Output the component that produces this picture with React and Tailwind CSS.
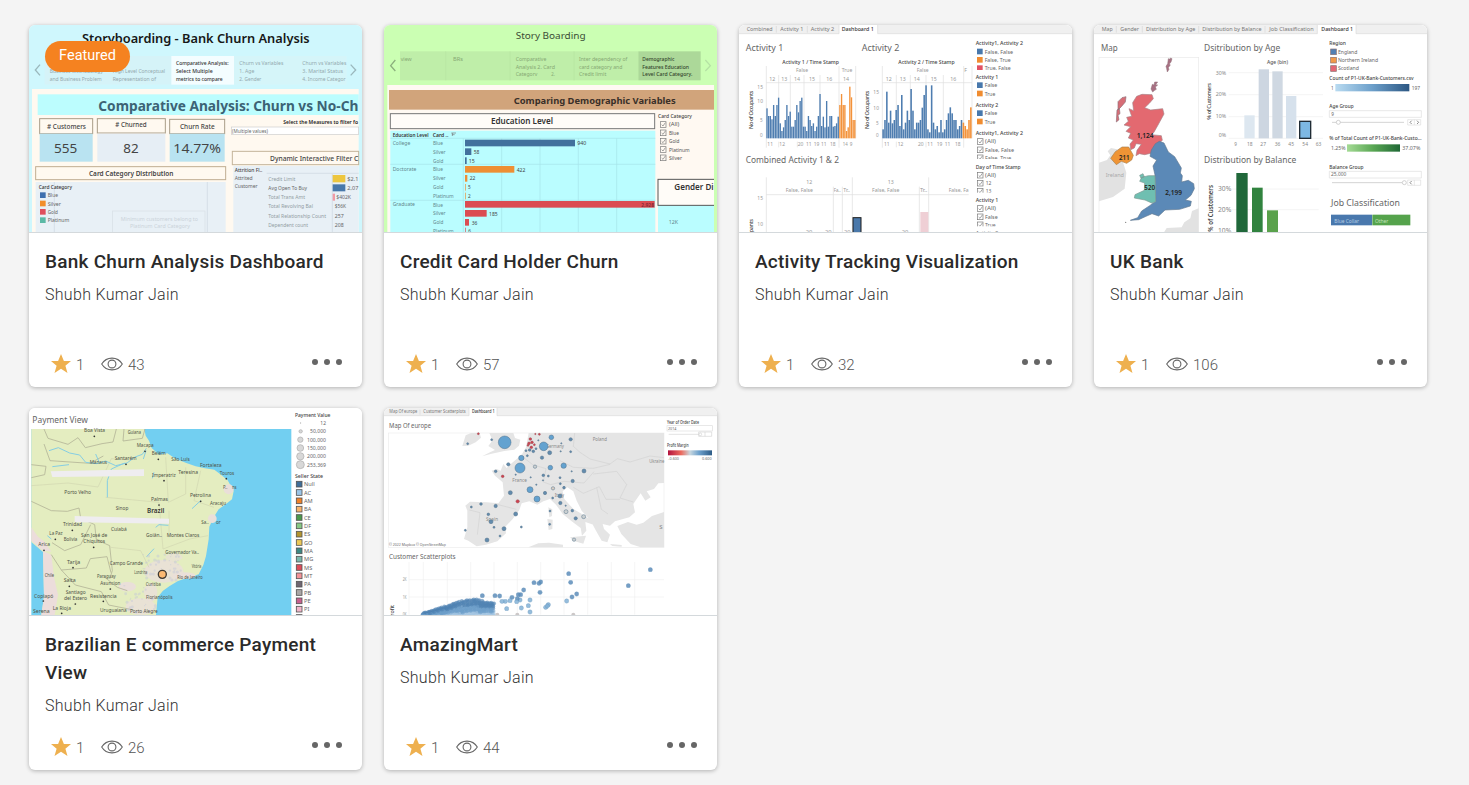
import React from 'react';

// Each label: [text, x, baseline, width, size, fill, weight]
function Labels({ items, fill = '#666', size = 19 }) {
  return items.map(([t, x, y, w, s, f, b], i) => (
    <text key={i} x={x} y={y} fontSize={s || size} fill={f || fill} fontWeight={b || 400}
      textLength={w} lengthAdjust="spacingAndGlyphs">{t}</text>
  ));
}

function Thumb({ box, children }) {
  return (
    <svg viewBox={box} className="block h-[207px] w-full" preserveAspectRatio="none" fontFamily='"Noto Sans", sans-serif'>
      {children}
    </svg>
  );
}

const R = ({ x, y, w, h, f = 'none', s, sw = 3, o }) => (
  <rect x={x} y={y} width={w} height={h} fill={f} stroke={s} strokeWidth={s ? sw : undefined} opacity={o} />
);

function Swatches({ x, y, step, colors, size = 17, stroke }) {
  return colors.map((c, i) => <R key={i} x={x} y={y + i * step} w={size} h={size} f={c} s={stroke} sw={2} />);
}

function Checks({ x, ys }) {
  return ys.map((y) => (
    <g key={y} fill="none" stroke="#777" strokeWidth="2">
      <rect x={x} y={y} width="17" height="17" />
      <path d={`M${x + 4} ${y + 9}l4 4 7-10`} />
    </g>
  ));
}

function BankChurn() {
  return (
    <Thumb box="15 15 999 621">
      <R x={10} y={10} w={1010} h={630} f="#cff7fd" />
      <Labels items={[['Storyboarding - Bank Churn Analysis', 174, 68, 683, 35, '#171717', 600]]} />
      <R x={62} y={108} w={380} h={86} f="#d5f3f8" />
      <R x={442} y={108} w={188} h={86} f="#f4fdff" />
      <R x={630} y={108} w={338} h={86} f="#d5f5f9" />
      <path d="M48 134l-14 16 14 16M980 134l15 16-15 16" fill="none" stroke="#9bb8bd" strokeWidth="4" />
      <Labels size={18} fill="#93a9ae" items={[
        ['Business Methodology', 77, 160, 160], ['and Business Problem', 77, 182, 156],
        ['High Level Conceptual', 266, 160, 157], ['Representation of', 266, 182, 130],
        ['Comparative Analysis:', 456, 136, 158, 18, '#333', 500], ['Select Multiple', 456, 160, 110, 18, '#333', 500], ['metrics to compare', 456, 182, 140, 18, '#333', 500],
        ['Churn vs Variables', 646, 136, 132], ['1. Age', 646, 160, 45], ['2. Gender', 646, 182, 66],
        ['Churn vs Variables', 835, 136, 132], ['3. Marital Status', 835, 160, 122], ['4. Income Categor', 835, 182, 130],
      ]} />
      <R x={24} y={207} w={980} h={430} f="#fff9f0" />
      <R x={41} y={223} w={963} h={62} f="#bcfdfe" />
      <Labels items={[['Comparative Analysis: Churn vs No-Ch', 223, 273, 780, 42, '#3c6375', 700]]} />
      <R x={47} y={296} w={159} h={45} s="#a99d88" /><R x={220} y={296} w={204} h={43} s="#a99d88" /><R x={437} y={298} w={165} h={43} s="#a99d88" />
      <R x={47} y={341} w={159} h={84} f="#b9e3f1" /><R x={220} y={341} w={204} h={84} f="#e6eef5" /><R x={437} y={341} w={165} h={84} f="#b9e3f1" />
      <Labels fill="#444" items={[
        ['# Customers', 69, 326, 117, 23, '#444', 500], ['# Churned', 274, 322, 94, 23, '#444', 500], ['Churn Rate', 468, 327, 104, 23, '#444', 500],
        ['555', 90, 399, 70, 39], ['82', 298, 399, 46, 39], ['14.77%', 448, 399, 143, 39],
        ['Select the Measures to filter fo', 778, 311, 224, 17, '#222', 600],
      ]} />
      <R x={622} y={321} w={382} h={22} f="#fff" s="#ccc" sw={2} />
      <Labels items={[['(Multiple values)', 624, 338, 108, 16]]} />
      <R x={625} y={394} w={379} h={40} s="#c4b49a" />
      <Labels items={[['Dynamic Interactive Filter C', 738, 422, 265, 23, '#444', 500]]} />
      <R x={35} y={440} w={570} h={39} s="#c0ad91" />
      <Labels items={[['Card Category Distribution', 195, 469, 253, 22, '#444', 600]]} />
      <R x={35} y={486} w={570} h={151} f="#e8f0f6" /><R x={628} y={438} w={376} h={199} f="#e8f0f6" />
      <path d="M91 486v151M550 486v151M728 460h276M925 462v175" stroke="#cbd8df" strokeWidth="2" />
      <Swatches x={48} y={517} step={25} colors={['#3e6fae', '#f28e2b', '#df4f5d', '#5bb9a6']} />
      <Labels size={17} items={[['Card Category', 44, 508, 100, 17, '#333', 500], ['Blue', 71, 532, 31], ['Silver', 71, 557, 40], ['Gold', 71, 582, 31], ['Platinum', 71, 607, 65]]} />
      <R x={265} y={573} w={278} h={72} s="#d7dfe5" sw={2} />
      <Labels size={17} fill="#cbd3da" items={[['Minimum customers belong to', 290, 602, 232], ['Platinum Card Category', 318, 625, 180]]} />
      <Labels size={17} items={[
        ['Attrition Fl..', 632, 456, 83, 17, '#444', 500], ['Attrited', 632, 481, 54], ['Customer', 632, 504, 69],
        ['Credit Limit', 733, 482, 81, 17, '#929da3'], ['Avg Open To Buy', 733, 510, 116], ['Total Trans Amt', 733, 537, 110, 17, '#929da3'], ['Total Revolving Bal', 733, 565, 134, 17, '#929da3'], ['Total Relationship Count', 733, 593, 173, 17, '#929da3'], ['Dependent count', 733, 621, 119, 17, '#929da3'],
        ['$2.1', 970, 482, 33], ['2,07', 970, 510, 33], ['$402K', 937, 537, 44], ['$56K', 932, 565, 34], ['257', 932, 593, 27], ['208', 932, 621, 27],
      ]} />
      <R x={926} y={465} w={38} h={22} f="#edc63f" /><R x={926} y={493} w={38} h={21} f="#4878aa" /><R x={926} y={521} w={7} h={21} f="#f19aa5" />
    </Thumb>
  );
}

function CreditCard() {
  const bars = [[54, 330, 0], [80, 19, 0], [107, 5, 0], [133, 148, 1], [160, 7, 1], [187, 2, 1], [213, 2, 1], [238, 569, 2], [265, 65, 2], [292, 12, 2], [318, 2, 2]];
  return (
    <Thumb box="12 15 999 621">
      <R x={8} y={10} w={1010} h={630} f="#cbffb3" />
      <Labels items={[['Story Boarding', 407, 58, 210, 29, '#3c4d36']]} />
      <R x={60} y={94} w={715} h={87} f="#bfeea9" /><R x={775} y={94} w={187} h={87} f="#acd899" />
      <path d="M197 94v87M390 94v87M582 94v87" stroke="#b7e5a2" strokeWidth="2" />
      <path d="M46 120l-14 17 14 16" fill="none" stroke="#8baf7d" strokeWidth="4" />
      <path d="M976 120l15 17-15 16" fill="none" stroke="#b5e2a4" strokeWidth="4" />
      <Labels size={17} fill="#86a974" items={[
        ['view', 62, 123, 33], ['BRs', 219, 123, 30], ['Comparative', 407, 124, 92], ['Analysis 2. Card', 407, 146, 118], ['Categorv', 407, 168, 65], ['2.', 514, 168, 11],
        ['Inter dependency of', 597, 124, 145], ['card category and', 597, 146, 130], ['Credit limit', 597, 168, 82],
        ['Demographic', 787, 124, 96, 17, '#34452c', 500], ['Features Education', 787, 146, 140, 17, '#34452c', 500], ['Level  Card Category.', 787, 168, 150, 17, '#34452c', 500],
      ]} />
      <R x={22} y={195} w={980} h={442} f="#fff9f2" />
      <R x={27} y={210} w={975} h={59} f="#d1a47b" />
      <Labels items={[['Comparing Demographic Variables', 401, 251, 486, 28, '#3a3029', 700]]} />
      <R x={31} y={281} w={793} h={45} f="#fffcf8" s="#777" />
      <Labels items={[['Education Level', 333, 313, 186, 25, '#333', 600]]} />
      <R x={31} y={332} w={795} h={305} f="#bafdff" />
      <R x={834} y={555} w={168} h={82} f="#bafdff" />
      <R x={834} y={478} w={180} h={78} f="#fffcf8" s="#555" /><R x={1002} y={470} w={14} h={170} f="#cbffb3" />
      <path d="M31 355h795M31 433h795M31 541h795M250 355v282M365 355v282M480 355v282M595 355v282M710 355v282" stroke="#a6e4e8" strokeWidth="2" />
      {bars.map(([y, w, c], i) => <R key={i} x={255} y={y + 305} w={w} h={20} f={['#42719d', '#ee8f34', '#db4c52'][c]} />)}
      <Labels size={17} fill="#62888e" items={[
        ['Education Level', 38, 350, 108, 16, '#333', 600], ['Card ..', 158, 350, 47, 16, '#333', 600],
        ['College', 38, 374, 53], ['Blue', 159, 375, 30], ['Silver', 159, 401, 38], ['Gold', 159, 428, 31],
        ['Doctorate', 38, 453, 71], ['Blue', 159, 454, 30], ['Silver', 159, 480, 38], ['Gold', 159, 507, 31], ['Platinum', 159, 534, 62],
        ['Graduate', 38, 559, 67], ['Blue', 159, 560, 30], ['Silver', 159, 586, 38], ['Gold', 159, 613, 31], ['Platinum', 159, 639, 62],
        ['940', 592, 376, 27, 18, '#444'], ['58', 281, 401, 17, 18, '#444'], ['15', 266, 428, 18, 18, '#444'], ['422', 410, 455, 26, 18, '#444'], ['22', 269, 481, 17, 18, '#444'], ['5', 264, 508, 8, 18, '#444'], ['2', 264, 535, 8, 18, '#444'], ['2,928', 784, 560, 38, 18, '#7f2732', 600], ['185', 327, 587, 26, 18, '#444'], ['36', 275, 614, 17, 18, '#444'], ['6', 265, 639, 8, 18, '#444'],
        ['Card Category', 834, 294, 102, 17, '#444', 500], ['(All)', 867, 319, 31, 17, '#555'], ['Blue', 867, 344, 30, 17, '#555'], ['Gold', 867, 370, 31, 17, '#555'], ['Platinum', 867, 395, 62, 17, '#555'], ['Silver', 867, 420, 39, 17, '#555'],
        ['Gender Di', 883, 510, 118, 25, '#333', 600], ['12K', 866, 611, 28, 18],
      ]} />
      <path d="M214 339h14M216 344h8M217 339v9" stroke="#777" strokeWidth="2" />
      <Checks x={841} ys={[305, 330, 355, 380, 405]} />
    </Thumb>
  );
}

function Tabs({ y, items, active, ax, aw }) {
  return (
    <g>
      <R x={8} y={12} w={1010} h={y + 8 - 12} f="#f0f0f0" />
      <R x={ax} y={12} w={aw} h={y + 10 - 12} f="#fff" />
      <path d={`M8 ${y + 8}H${ax}V12M${ax + aw} 12V${y + 8}H1018`} fill="none" stroke="#dadada" strokeWidth="2" />
      <Labels size={18} fill="#777" items={items} />
      <Labels size={18} items={[active]} />
    </g>
  );
}

function Columns({ x, base, step, tops, orangeFrom }) {
  return tops.map((t, i) => <R key={i} x={x + i * step} y={t} w={step - 0.9} h={base - t} f={i < orangeFrom ? '#4e7db0' : '#f3923a'} />);
}

const activityOne = [265, 288, 288, 298, 255, 288, 255, 233, 310, 333, 322, 300, 255, 288, 275, 320, 320, 300, 255, 277, 243, 233, 320, 320, 333, 288, 300, 318, 310, 333, 320, 288, 222, 318, 290, 322, 243, 320, 288, 288, 320, 318, 310, 290, 255, 222, 255, 255, 333, 322, 200, 232, 300, 300];
const activityTwo = [328, 300, 215, 308, 272, 310, 300, 270, 255, 318, 225, 328, 308, 272, 300, 207, 272, 328, 308, 308, 300, 263, 225, 196, 328, 337, 196, 308, 328, 318, 337, 300, 337, 328, 300, 280, 262, 280, 300, 300, 328, 318, 300, 308, 318, 328, 300, 262];

function Activity() {
  return (
    <Thumb box="12 15 999 621">
      <R x={8} y={10} w={1010} h={630} f="#fff" />
      <Tabs y={33} ax={312} aw={116} items={[['Combined', 35, 33, 78], ['Activity 1', 136, 33, 69], ['Activity 2', 227, 33, 71]]} active={['Dashboard 1', 320, 33, 96, 18, '#333', 500]} />
      <path d="M124 18v20M217 18v20" stroke="#d8d8d8" strokeWidth="2" />
      <Labels items={[['Activity 1', 32, 94, 113, 27], ['Activity 2', 380, 94, 113, 27], ['Combined Activity 1 & 2', 32, 430, 280, 27]]} />
      <path d="M94 138v245M131 165v190M166 165v190M207 165v190M255 165v190M312 138v245M362 138v217M94 188h268M442 138v245M484 165v190M526 165v190M573 165v190M625 165v190M686 138v245M711 138v217M442 188h269M131 365v17M187 365v17M484 365v17M573 365v17" stroke="#dedede" strokeWidth="2" />
      <Columns x={94} base={355} step={4.97} tops={activityOne} orangeFrom={44} />
      <Columns x={442} base={355} step={5.6} tops={activityTwo} orangeFrom={43} />
      <Labels size={17} fill="#999" items={[
        ['Activity 1 / Time Stamp', 142, 131, 170, 18, '#444', 500], ['Activity 2 / Time Stamp', 490, 131, 169, 18, '#444', 500],
        ['False', 183, 156, 36], ['True', 320, 156, 32], ['False', 545, 156, 36], ['F', 688, 156, 8],
        ['12', 103, 182, 18], ['13', 139, 182, 18], ['14', 177, 182, 18], ['15', 222, 182, 18], ['16', 274, 182, 18], ['14', 324, 182, 18],
        ['12', 452, 182, 18], ['13', 494, 182, 18], ['14', 536, 182, 18], ['15', 587, 182, 18], ['16', 646, 182, 18],
        ['15', 67, 206, 17], ['10', 67, 250, 17], ['5', 75, 305, 8], ['0', 75, 350, 8], ['15', 415, 222, 17], ['10', 415, 269, 17], ['5', 423, 315, 8], ['0', 423, 350, 8],
        ['11', 97, 378, 17], ['12', 133, 378, 17], ['20', 188, 378, 17], ['11', 213, 378, 17], ['19', 236, 378, 17], ['11', 258, 378, 17], ['18', 285, 378, 17], ['14', 323, 378, 15], ['9', 344, 378, 8],
        ['11', 447, 378, 17], ['12', 488, 378, 17], ['20', 549, 378, 17], ['11', 577, 378, 17], ['19', 605, 378, 17], ['11', 629, 378, 17], ['18', 660, 378, 17],
        ['12', 214, 492, 18], ['13', 458, 492, 18], ['False, False', 152, 517, 82], ['Fa..', 296, 517, 21], ['Tr..', 325, 517, 20], ['False, False', 411, 517, 82], ['Tr..', 555, 517, 22], ['False, Fa', 641, 517, 60],
        ['15', 67, 541, 17], ['10', 67, 619, 17], ['20', 212, 643, 20], ['20', 270, 643, 20], ['20', 327, 643, 20], ['20', 500, 643, 20],
      ]} />
      <g fill="#444" fontSize="17" fontWeight="500">
        <text transform="translate(54 327) rotate(-90)" textLength="115">No of Occupants</text>
        <text transform="translate(402 327) rotate(-90)" textLength="115">No of Occupants</text>
        <text transform="translate(54 712) rotate(-90)" textLength="115">No of Occupants</text>
      </g>
      <path d="M94 472v165M352 472v165M581 472v165M295 500v137M322 500v137M553 500v137M94 524h607" stroke="#ddd" strokeWidth="2" />
      <R x={354} y={593} w={24} h={50} f="#4a78aa" s="#1d1d1d" sw={3} /><R x={556} y={576} w={24} h={62} f="#efcfd5" />
      {[[69, 'Activity1, Activity 2', 142], [170, 'Activity 1', 68], [254, 'Activity 2', 68], [339, 'Activity1, Activity 2', 142], [440, 'Day of Time Stamp', 135], [540, 'Activity 1', 68]].map(([y, t, w]) => (
        <Labels key={y} items={[[t, 722, y + 6, w, 17, '#444', 500]]} />
      ))}
      <Swatches x={726} y={86} step={25} colors={['#4878ac', '#f08c30', '#e25264']} />
      <Swatches x={726} y={187} step={25} colors={['#4878ac', '#f08c30']} /><Swatches x={726} y={271} step={25} colors={['#4878ac', '#f08c30']} />
      <Checks x={727} ys={[356, 381, 405, 457, 481, 505, 557, 582, 606]} />
      <Labels size={17} items={[
        ['False, False', 749, 101, 85], ['False, True', 749, 126, 78], ['True, False', 749, 151, 78], ['False', 749, 202, 38], ['True', 749, 227, 32], ['False', 749, 286, 38], ['True', 749, 311, 32],
        ['(All)', 750, 370, 33], ['False, False', 750, 395, 87], ['False, True', 750, 420, 79], ['(All)', 750, 471, 33], ['12', 752, 495, 17], ['13', 752, 519, 17], ['(All)', 750, 571, 33], ['False', 750, 596, 38], ['True', 750, 621, 32],
      ]} />
      <R x={720} y={150} w={160} h={8} f="#fff" /><R x={720} y={417} w={160} h={9} f="#fff" /><R x={720} y={518} w={160} h={9} f="#fff" /><R x={720} y={619} w={160} h={9} f="#fff" />
      <Labels items={[['Activity 2', 722, 646, 68, 17, '#777', 500]]} />
    </Thumb>
  );
}

function UkBank() {
  return (
    <Thumb box="12 15 999 621">
      <defs>
        <linearGradient id="ukBlue"><stop stopColor="#b9dbf1" /><stop offset=".5" stopColor="#6c9fca" /><stop offset="1" stopColor="#2c5783" /></linearGradient>
        <linearGradient id="ukGreen"><stop stopColor="#a5db95" /><stop offset=".5" stopColor="#58a653" /><stop offset="1" stopColor="#206836" /></linearGradient>
      </defs>
      <R x={8} y={10} w={1010} h={630} f="#fff" />
      <Tabs y={33} ax={682} aw={116} items={[['Map', 35, 33, 33], ['Gender', 91, 33, 56], ['Distribution by Age', 168, 33, 148], ['Distribution by Balance', 337, 33, 178], ['Job Classification', 538, 33, 133]]} active={['Dashboard 1', 694, 33, 95, 18, '#333', 500]} />
      <path d="M79 18v20M157 18v20M326 18v20M525 18v20" stroke="#d8d8d8" strokeWidth="2" />
      <Labels items={[['Map', 33, 94, 50, 27], ['Dsitribution by Age', 342, 94, 229, 27], ['Distribution by Balance', 342, 430, 277, 27], ['Job Classification', 723, 559, 207, 27]]} />
      <R x={27} y={112} w={299} h={540} f="#fff" s="#e9e9e9" sw={2} />
      <path d="M27 428l24-8 10-14-8-12 10-10 18 4 20 45 8 25-5 48-35 25-42 13zM222 637l8-13 45-2 8-15 18-12 5-22 20-8v72z" fill="#e2e2e2" />
      <path d="M140 229l16-6 30 1 4 12-12 14-14 13 18 7 19-2 17-2 4 16-18 33-13 23-9 6 32 3 3 14-19 17-12 21-22 5-16-3-10 6 3-16 13-18-16-2-5 13-11 5-2-17 10-12-15-6 7-14-14-6 14-14-20-5 13-11-5-12 15-3-8-23 14 6-3-24z" fill="#e36970" stroke="#a78388" strokeWidth="2" />
      <path d="M84 245l12-12 12-3-2 16-12 14-10 10zM81 270l7-5 2 16-6 5 3 13-8 7z" fill="#d76d76" stroke="#8e7078" strokeWidth="2" />
      <path d="M228 139l5-8 2-15 6 2 0-4 5 2-3 10-5 6 3 3-6 8 2 5-5 8-2-10zM183 207l4-14 5 2 2-9 9 0-6 8 6 1-7 6 3 7-5 3-6 5z" fill="#a87083" stroke="#8e7078" strokeWidth="1.5" />
      <path d="M208 364l14 5 13 27 19 14 20 34-3 15 6 8-2 19 20-5 16 10 2 15-10 20-17 14 18 4-3 14-32 10-44 2-19 18-20-7-18 8-22 10-25 2 22-8 12-20 24-16 18-13-2-79-6-27 11-18-20-11 4-19 12-19z" fill="#5b89b7" stroke="#607991" strokeWidth="2" />
      <path d="M155 472l20-5 20 0 2 78-12 4-20-9-32-6 2-10 28-13 1-22-15-5zM149 466l10-5 4 9-10 5z" fill="#6fbfb1" stroke="#7c9992" strokeWidth="2" />
      <path d="M62 415l14-20 20-14 20 0 14 25-5 14-15 10-16-6-15 10z" fill="#ef9435" stroke="#a78050" strokeWidth="2" />
      <circle cx="107" cy="607" r="2" fill="#777" />
      <Labels items={[['1,124', 140, 354, 51, 20, '#222', 600], ['211', 87, 421, 32, 20, '#222', 600], ['520', 163, 509, 32, 20, '#222', 600], ['2,199', 226, 525, 50, 20, '#222', 600], ['Ireland', 47, 471, 55, 18, '#aaa']]} />
      <path d="M416 158h283M416 224h283M416 290h283M416 355h283M416 507h270M416 569h270" stroke="#eee" strokeWidth="2" />
      <R x={463} y={286} w={31} h={69} f="#dde7f0" /><R x={506} y={148} w={31} h={207} f="#cdd6e1" /><R x={547} y={154} w={31} h={201} f="#cfd8e2" /><R x={588} y={228} w={31} h={127} f="#d6e1ec" />
      <R x={629} y={304} w={33} h={51} f="#7db8e3" s="#202c35" sw={4} />
      <R x={439} y={459} w={34} h={180} f="#20683a" /><R x={486} y={503} w={32} h={136} f="#31833f" /><R x={531} y={571} w={33} h={70} f="#5aa24c" />
      <Labels size={17} fill="#888" items={[
        ['Age (bin)', 531, 131, 63, 18, '#555', 500], ['30%', 377, 164, 31], ['20%', 377, 229, 31], ['10%', 377, 295, 31], ['0%', 386, 351, 22],
        ['9', 433, 378, 8], ['18', 471, 378, 17], ['27', 511, 378, 17], ['36', 554, 378, 17], ['45', 595, 378, 17], ['54', 637, 378, 17], ['63', 677, 378, 17],
        ['30%', 384, 514, 40, 22], ['20%', 384, 577, 40, 22], ['10%', 384, 639, 40, 22],
      ]} />
      <g fill="#444" fontWeight="500">
        <text fontSize="17" transform="translate(363 299) rotate(-90)" textLength="110">% of Customers</text>
        <text fontSize="22" fontWeight="600" transform="translate(370 635) rotate(-90)" textLength="140" lengthAdjust="spacingAndGlyphs">% of Customers</text>
      </g>
      <Swatches x={722} y={87} step={25} colors={['#5280b3', '#f19a48', '#e36673']} stroke="#8a6f6f" />
      <Labels size={17} items={[
        ['Region', 718, 75, 50, 17, '#444', 500], ['England', 744, 101, 58], ['Northern Ireland', 744, 126, 120], ['Scotland', 744, 151, 63],
        ['Count of P1-UK-Bank-Customers.csv', 718, 180, 253, 17, '#444', 500], ['1', 723, 210, 8], ['197', 965, 210, 25],
        ['Age Group', 718, 265, 73, 17, '#444', 500], ['9', 724, 288, 8], ['% of Total Count of P1-UK-Bank-Custo...', 718, 361, 277, 17, '#444', 500], ['1.25%', 723, 390, 44], ['37.07%', 937, 390, 54],
        ['Balance Group', 718, 446, 103, 17, '#444', 500], ['25,000', 723, 469, 46],
      ]} />
      <R x={736} y={192} w={222} h={22} f="url(#ukBlue)" /><R x={771} y={373} w={159} h={22} f="url(#ukGreen)" />
      <path d="M718 272h276v20H718zM718 454h276v20H718z" fill="none" stroke="#ddd" strokeWidth="2" />
      <path d="M726 307h216M726 488h210" stroke="#d4d4d4" strokeWidth="3" />
      <g fill="#fff" stroke="#bbb" strokeWidth="2"><circle cx="745" cy="307" r="6" /><circle cx="943" cy="488" r="6" /></g>
      <path d="M953 299h39v16h-39zM973 299v16M953 480h39v16h-39zM973 480v16" fill="none" stroke="#ddd" strokeWidth="2" />
      <path d="M965 302l-5 5 5 5M981 302l5 5-5 5M965 483l-5 5 5 5" fill="none" stroke="#555" strokeWidth="2" />
      <R x={723} y={584} w={123} h={32} f="#4978ad" /><R x={847} y={584} w={114} h={32} f="#55a34c" />
      <Labels items={[['Blue Collar', 733, 610, 74, 17, '#b6cde4'], ['Other', 855, 610, 40, 17, '#c4e3bd']]} />
    </Thumb>
  );
}

function Brazil() {
  const cities = [
    ['Boa Vista', 180, 85, 63], ['Guiana', 311, 89, 40], ['Macapa', 338, 130, 51], ['Belém', 383, 153, 42], ['São Luís', 442, 170, 55], ['Santarém', 272, 168, 66], ['Manaus', 197, 180, 52], ['Fortaleza', 528, 189, 65], ['Teresina', 463, 211, 59], ['Imperatriz', 384, 218, 71], ['Touros', 587, 212, 44], ['P..', 597, 256, 13], ['ns', 624, 256, 14],
    ['Porto Velho', 121, 269, 80], ['Petrolina', 498, 279, 63], ['Palmas', 381, 292, 51], ['Aracaju', 558, 303, 48], ['Sinop', 275, 319, 38], ['Sa..', 532, 360, 22], ['or', 576, 360, 14], ['Trinidad', 117, 367, 57], ['Cuiabá', 261, 380, 47], ['La Paz', 76, 394, 40], ['San José de', 171, 398, 79], ['Chiquitos', 178, 417, 65], ['Bolivia', 119, 412, 41], ['Goiân..', 366, 398, 48], ['Montes Claros', 428, 398, 98], ['Arica', 43, 427, 35], ['Governador Va..', 424, 451, 101], ['Tarija', 129, 479, 40], ['Campo Grande', 257, 484, 100], ['Vitória', 503, 492, 29], ['Londrina', 331, 509, 39], ['Chile', 62, 519, 28], ['Paraguay', 219, 521, 56], ['Rio de Janeiro', 460, 526, 76], ['Salta', 119, 534, 36], ['Asuncion', 229, 543, 60], ['Curitiba', 365, 546, 45], ['Santiago', 125, 571, 60], ['del Estero', 120, 587, 69], ['Resistencia', 198, 582, 80], ['Florianópolis', 366, 584, 80], ['Copiapó', 30, 581, 58], ['La Rioja', 86, 617, 55], ['Serena', 27, 626, 50], ['Uruguaiana', 228, 624, 80], ['Porto Alegre', 318, 627, 83],
  ];
  const states = [['Null', '#3f6e99'], ['AC', '#9ac5e8'], ['AM', '#ef8128'], ['BA', '#f8b36a'], ['CE', '#4b994b'], ['DF', '#86c884'], ['ES', '#b2942f'], ['GO', '#edc957'], ['MA', '#3c8884'], ['MG', '#79b8ad'], ['MS', '#dd4d5a'], ['MT', '#f29398'], ['PA', '#706671'], ['PB', '#aaa6a5'], ['PE', '#c7608f'], ['PI', '#f2b6ca'], ['', '#caa4ac']];
  return (
    <Thumb box="15 12 999 621">
      <R x={10} y={8} w={1010} h={632} f="#fff" />
      <Labels items={[['Payment View', 25, 56, 167, 26]]} />
      <R x={22} y={75} w={780} h={558} f="#72cff1" />
      <path d="M22 75h339l4 20 10 15 8 22 22 20 25-4 25 16 32 13 28 10 28 6 28 4 22 17 18 15 18 32-5 25-18 14-22 16-14 22-14 30-2 38-8 50-8 27-14 28-34 10-28 10-25 15-20 14-16 20-5 53H52l8-55-3-134-35-30z" fill="#e4edc0" />
      <path d="M57 440l25 12 8 68 12 52-10 61H52l8-55zM22 370l20 28 20 15 20 30-25-3-35-30z" fill="#ecdddb" />
      <g fill="#eadfd9"><circle cx="614" cy="256" r="15" /><circle cx="565" cy="344" r="13" /><ellipse cx="420" cy="502" rx="58" ry="34" opacity=".8" /><ellipse cx="450" cy="460" rx="25" ry="12" opacity=".7" /><ellipse cx="480" cy="515" rx="35" ry="10" /><ellipse cx="380" cy="565" rx="20" ry="28" opacity=".8" /><ellipse cx="350" cy="608" rx="45" ry="25" opacity=".8" /><ellipse cx="310" cy="548" rx="26" ry="14" /></g>
      <path d="M60 75l12 28 60 18 30-20 22 30 50-12 33-5 10-39M300 75l-3 36 58-8 8-28M22 182l44 5-4 25-40 9M22 292l60 28 48 2 35-10 5 30 42 20 5 45 40 18 8 75-8 25M82 452l30 46 75-6 12-28 50-6 12 48M112 498l42 45 78 20 22 40 75 15M240 518l40 32 30 10M60 120l18 50 120 8 40-22M200 362l-30 60-48 18-38-24" fill="none" stroke="#b3b598" strokeWidth="2.5" strokeLinejoin="round" />
      <path d="M22 245l110-8 90 12 40-85 60 4M245 280l160 15 12 140 80-30 55-10M425 160l8 135 52-25 0-80M530 200l-20 90 60 20M435 320v80M260 430l90 10 25 50" fill="none" stroke="#d1d7b0" strokeWidth="2" />
      <path d="M75 140l28-9 34 16 30 6 18 22 34 4 26-8 30 14 34-8 24-18 22-8 12-18M215 150l12 28M250 280v-50l12-35 40-18M85 188l50-6M366 140l-8 25M368 458l22-24M395 370l10-8 28 2M530 290l-26 24M390 205l-5 18M70 395l12 10" fill="none" stroke="#85cde3" strokeWidth="3" />
      <path d="M80 202l280-6v20l-275 3zM152 336l283 8v15l-283-4z" fill="#efedf0" />
      <g fill="#c2c6da" opacity=".45">{Array.from({ length: 46 }, (_, i) => <circle key={i} cx={358 + (i * i * 17 + i * 29) % 118} cy={452 + (i * i * 11 + i * 7) % 78} r={2 + (i % 3) * 1.3} />)}{Array.from({ length: 28 }, (_, i) => <circle key={'s' + i} cx={300 + (i * i * 13 + i * 31) % 95} cy={545 + (i * i * 7 + i * 19) % 82} r={2 + (i % 3) * 1.2} />)}</g>
      <Labels size={18} fill="#4e5246" items={cities} />
      <Labels items={[['Brazil', 369, 328, 52, 21, '#333', 600]]} />
      <g fill="#333">{[[211, 97], [306, 181], [363, 142], [403, 166], [420, 230], [530, 292], [607, 224], [405, 303], [145, 379], [94, 406], [209, 430], [60, 439], [147, 491], [136, 547], [259, 555], [154, 600], [238, 592], [58, 591], [113, 628]].map(([x, y]) => <circle key={x + '-' + y} cx={x} cy={y} r="2.6" />)}</g>
      <circle cx="415" cy="511" r="12" fill="#fbb974" stroke="#3e3832" strokeWidth="4" />
      <Labels size={17} items={[['Payment Value', 813, 38, 106, 17, '#444', 500], ['12', 889, 63, 17], ['50,000', 858, 88, 48], ['100,000', 849, 113, 57], ['150,000', 849, 138, 57], ['200,000', 849, 163, 57], ['253,369', 849, 188, 57], ['Seller State', 813, 222, 84, 17, '#444', 500]]} />
      <g fill="#d8d8d8" stroke="#aaa" strokeWidth="2"><circle cx="830" cy="57" r="1" /><circle cx="830" cy="82" r="5" /><circle cx="829" cy="107" r="8" /><circle cx="829" cy="132" r="10" /><circle cx="829" cy="157" r="11" /><circle cx="829" cy="182" r="12" /></g>
      {states.map(([t, c], i) => <g key={i}><R x={817} y={232 + i * 25} w={17} h={17} f={c} s="#555" sw={2.5} /><text x="840" y={247 + i * 25} fontSize="17" fill="#666">{t}</text></g>)}
    </Thumb>
  );
}

function AmazingMart() {
  const d = [[374, 115, 19], [491, 127, 13], [514, 100, 7], [424, 162, 8], [420, 192, 15], [385, 181, 5], [511, 191, 7], [551, 185, 8], [450, 257, 9], [471, 285, 9], [391, 266, 6], [495, 267, 5], [407, 330, 6], [372, 374, 6], [333, 353, 6], [321, 408, 6], [303, 300, 4], [347, 306, 5], [325, 331, 4], [572, 106, 5], [509, 146, 6], [486, 161, 5], [540, 276, 6], [541, 297, 5], [577, 320, 4], [587, 343, 5], [578, 231, 5], [612, 201, 6], [490, 214, 4], [505, 216, 3], [540, 221, 3], [552, 251, 4], [558, 323, 6, 1], [611, 338, 6, 1], [582, 407, 5, 1], [519, 253, 5, 3], [465, 188, 5, 1], [413, 292, 5, 2], [368, 217, 4, 2], [295, 89, 3, 2], [263, 119, 3], [335, 107, 3], [347, 202, 4], [274, 309, 3], [256, 379, 3], [342, 370, 3], [360, 396, 3], [424, 369, 3], [509, 361, 3], [510, 321, 3], [518, 282, 3], [572, 143, 3], [544, 118, 2], [541, 239, 3], [489, 229, 2], [469, 242, 2], [452, 220, 2], [557, 305, 2], [575, 202, 2], [542, 142, 2], [407, 212, 2], [447, 118, 4, 2], [456, 115, 4, 2], [451, 105, 4, 2], [454, 130, 4, 2], [444, 124, 3, 2], [463, 122, 3, 2], [478, 91, 3, 2], [466, 90, 2, 2], [449, 138, 4], [460, 142, 4], [438, 140, 3], [468, 134, 3], [442, 155, 3], [475, 109, 2]];
  const out = [[811, 497], [745, 545], [566, 509], [572, 535], [590, 570], [576, 579], [560, 591], [462, 536], [482, 534], [477, 538], [480, 565], [431, 558], [415, 572], [422, 572], [450, 588], [445, 605], [505, 602], [497, 610], [502, 606], [450, 624], [424, 612], [307, 575], [345, 575], [359, 576], [396, 580], [390, 590], [376, 592], [366, 592], [420, 588], [412, 584], [380, 614], [410, 593]];
  return (
    <Thumb box="12 12 999 621">
      <defs><linearGradient id="margin"><stop stopColor="#b3123d" /><stop offset=".3" stopColor="#ec6b5e" /><stop offset=".5" stopColor="#c8d7df" /><stop offset=".7" stopColor="#6fa2cd" /><stop offset="1" stopColor="#2c5b86" /></linearGradient></defs>
      <R x={8} y={8} w={1010} h={632} f="#fff" />
      <Tabs y={27} ax={267} aw={84} items={[['Map Of europe', 28, 28, 84, 14], ['Customer Scatterplots', 130, 28, 127, 14]]} active={['Dashboard 1', 276, 28, 68, 14, '#333', 500]} />
      <path d="M120 17v15" stroke="#d8d8d8" strokeWidth="2" />
      <Labels items={[['Map Of europe', 27, 73, 126, 21], ['Customer Scatterplots', 27, 464, 200, 21]]} />
      <R x={25} y={87} w={827} h={343} f="#fff" s="#ececec" sw={2} />
      <path d="M247 126l10-32 16-7h26l4 14-16 14-22 10zM306 157l24-12 15-7-20-12 12-16-4-12-5-11h72l5 15 16 5-4 18-14 12-30 4-38 8z" fill="#e5e5e5" />
      <path d="M446 87L852 87L852 237L835 238L822 255L800 262L812 280L796 290L782 268L770 285L760 300L765 325L748 340L705 352L690 365L668 360L672 375L690 392L682 415L665 410L648 380L632 350L605 320L590 290L580 262L562 250L548 262L553 285L580 315L602 328L636 350L640 362L616 354L619 380L606 395L602 372L575 352L548 330L528 302L510 285L490 292L472 302L448 292L425 298L418 318L398 345L376 368L378 388L352 412L318 422L290 427L265 410L252 405L262 370L262 320L256 305L270 293L320 295L355 298L372 275L368 235L345 215L335 200L350 195L362 200L370 180L380 192L395 178L425 152L438 130Z" fill="#e5e5e5" />
      <path d="M505 310l12 6-1 20-8 4zM502 345l16 2-1 28-11 3zM570 400l48-5-8 24-28-8zM445 430l30-12 32-2 42 6v8zM712 366l32-12 26 8 20-6 26-20 36-12v106H782l-30-10-28-30zM690 420l35 3v5l-28-2z" fill="#e5e5e5" />
      <path d="M584 87l-4 40 20 18 30 20 60 15 22-16 38 10 60-18 42 5M540 170l40 20 60 3 50-12M430 160l28 22 40 12-8 40 22 8 40-10 60 5 30-34M347 300l62 16M268 318l32 8-8 66M640 210l70-8 30 40-20 40 40 12M580 250l30 18 48-20 20 38 42 0M650 250l14 66 20 14" fill="none" stroke="#cdcdcd" strokeWidth="1.6" strokeLinejoin="round" />
      <Labels size={17} fill="#888" items={[['Poland', 638, 110, 43], ['Ukraine', 808, 178, 45], ['France', 397, 235, 44], ['Spain', 318, 350, 36], ['Germany', 498, 133, 54], ['Italy', 524, 280, 28], ['S', 838, 376, 10], ['© 2022 Mapbox  © OpenStreetMap', 27, 425, 171, 13, '#666']]} />
      {d.map(([x, y, r, c = 0], i) => <circle key={i} cx={x} cy={y} r={r} fill={c === 0 ? (r > 6 ? '#63a2d0' : '#628bad') : ['', '#cbd0d1', '#cf4250', '#d8cdc2'][c]} stroke={c === 2 ? '#9a5059' : '#55728a'} strokeWidth="1.5" />)}
      <path d="M87 474v158M130 474v158M202 474v158M272 474v158M342 474v158M412 474v158M482 474v158M552 474v158M623 474v158M694 474v158M764 474v158M87 527h765M87 579h765" stroke="#f0f0f0" strokeWidth="2" />
      {Array.from({ length: 420 }, (_, i) => {
        const u = (i * 0.61803) % 1, v = (i * 0.75488 + 0.3) % 1;
        const x = 128 + u * 215, top = 628 - Math.min(u * 70, 42) + (u > 0.75 ? (u - 0.75) * 50 : 0);
        return <circle key={i} cx={x} cy={top + v * (642 - top)} r="6" fill={v < 0.35 ? '#4f82b2' : v < 0.7 ? '#6d9fca' : '#a5c7e2'} opacity=".6" />;
      })}
      {out.map(([x, y], i) => <circle key={i} cx={x} cy={y} r="6.5" fill={y > 585 ? '#83b2d7' : '#5d8ebb'} stroke="#5688b2" strokeWidth="1" opacity=".85" />)}
      <g fill="#ccc8c8"><circle cx="352" cy="632" r="6" /><circle cx="580" cy="632" r="6" /><circle cx="412" cy="632" r="6" /></g>
      <Labels size={15} fill="#999" items={[['2K', 68, 532, 12], ['1K', 68, 584, 12], ['0K', 68, 637, 12], ['Year of Order Date', 861, 59, 96, 13, '#444', 500], ['2014', 864, 77, 25, 13, '#666'], ['Profit Margin', 861, 129, 65, 13, '#444', 500], ['-0.600', 865, 167, 32, 13, '#666'], ['0.600', 966, 167, 29, 13, '#666']]} />
      <text transform="translate(43 645) rotate(-90)" fontSize="16" fontWeight="500" fill="#444">Profit</text>
      <R x={861} y={65} w={136} h={16} s="#ddd" sw={2} /><path d="M866 91h90M956 84h39v13h-39zM975 84v13" fill="none" stroke="#d4d4d4" strokeWidth="2" /><circle cx="961" cy="91" r="4" fill="#fff" stroke="#aaa" /><R x={864} y={139} w={132} h={15} f="url(#margin)" />
    </Thumb>
  );
}

const cards = [
  { title: 'Bank Churn Analysis Dashboard', views: 43, art: BankChurn, featured: true },
  { title: 'Credit Card Holder Churn', views: 57, art: CreditCard },
  { title: 'Activity Tracking Visualization', views: 32, art: Activity },
  { title: 'UK Bank', views: 106, art: UkBank },
  { title: 'Brazilian E commerce Payment View', views: 26, art: Brazil },
  { title: 'AmazingMart', views: 44, art: AmazingMart },
];

function Card({ title, views, art: Art, featured }) {
  return (
    <article className="relative flex h-[362px] flex-col overflow-hidden rounded-md bg-white shadow-[0_1px_4px_rgba(0,0,0,0.28)]">
      <div className="h-[208px] shrink-0 border-b border-[#d4d9dc]"><Art /></div>
      {featured && (
        <span className="absolute left-4 top-4 flex h-[31px] w-[85px] items-center justify-center rounded-full bg-[#f58220] pb-[2px] font-[Roboto,sans-serif] text-[14.5px] text-white">Featured</span>
      )}
      <div className="flex flex-1 flex-col px-4 pt-[15px]">
        <h2 className="font-[Roboto,sans-serif] text-[19px] font-medium leading-7 tracking-[0.25px] text-[#2a2a2a]">{title}</h2>
        <p className="mt-[7px] font-[Roboto,sans-serif] text-base font-light leading-6 tracking-[0.3px] text-[#333]">Shubh Kumar Jain</p>
        <div className="mb-[11px] mt-auto flex h-6 items-center pl-[6px] font-[Roboto,sans-serif] text-[15px] font-light text-[#555]">
          <svg className="h-5 w-5" viewBox="0 0 20 20" fill="#eeb04f"><path d="M10 0l2.9 7H20l-5.6 4.8L16.5 19 10 14.8 3.5 19l2.1-7.2L0 7h7.1z" /></svg>
          <span className="ml-[5px] w-[25px] pt-[2px]">1</span>
          <svg className="h-[14px] w-[22px]" viewBox="0 0 22 14" fill="none" stroke="#666" strokeWidth="1.1"><path d="M.7 7C3 3.2 6.7 1.1 11 1.1S19 3.2 21.3 7C19 10.8 15.3 12.9 11 12.9S3 10.8.7 7z" /><circle cx="11" cy="7" r="3.9" /></svg>
          <span className="ml-[5px] pt-[2px]">{views}</span>
          <button aria-label="More actions" className="mb-1 ml-auto mr-[4px]">
            <svg className="h-[6px] w-[30px]" viewBox="0 0 30 6" fill="#666"><circle cx="3" cy="3" r="3" /><circle cx="15" cy="3" r="3" /><circle cx="27" cy="3" r="3" /></svg>
          </button>
        </div>
      </div>
    </article>
  );
}

export default function App() {
  return (
    <main className="h-[785px] overflow-hidden bg-[#f4f4f4] pl-[29px] pt-[25px]">
      <div className="grid grid-cols-[repeat(4,333px)] gap-x-[22px] gap-y-[21px]">
        {cards.map((c) => <Card key={c.title} {...c} />)}
      </div>
    </main>
  );
}
